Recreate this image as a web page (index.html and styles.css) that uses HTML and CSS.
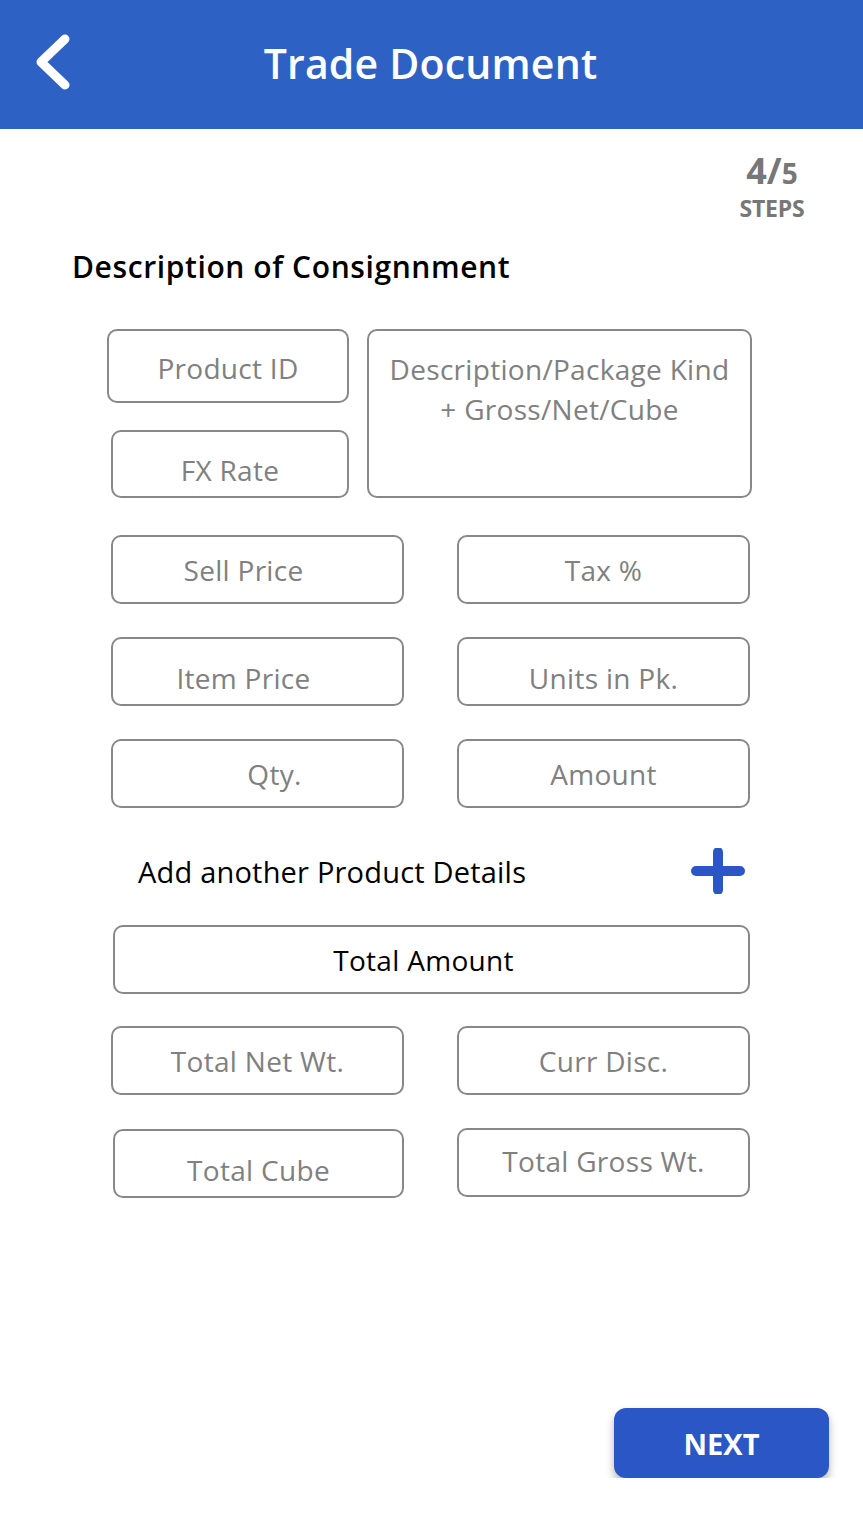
FILE: index.html
```html
<!DOCTYPE html>
<html lang="en">
<head>
    <meta charset="UTF-8">
    <meta name="viewport" content="width=device-width, initial-scale=1.0">
    <title>Trade Document</title>
    <link rel="stylesheet" href="styles.css">
</head>
<body>
    <header class="topbar">
        <a class="back" href="#">
            <svg width="40" height="56" viewBox="0 0 40 56"><path d="M33 5 L9 28 L33 51" fill="none" stroke="#fff" stroke-width="9" stroke-linecap="round" stroke-linejoin="round"/></svg>
        </a>
        <h1>Trade Document</h1>
    </header>

    <main class="page">
        <div class="steps">
            <div class="count">4/<span>5</span></div>
            <div class="label">STEPS</div>
        </div>

        <h2>Description of Consignnment</h2>

        <div class="top-grid">
            <div class="field product-id">Product ID</div>
            <div class="field desc">Description/Package Kind<br>+ Gross/Net/Cube</div>
            <div class="field fx low">FX Rate</div>
        </div>

        <div class="grid">
            <div class="field left">Sell Price</div>
            <div class="field">Tax %</div>
            <div class="field left low">Item Price</div>
            <div class="field low">Units in Pk.</div>
            <div class="field right">Qty.</div>
            <div class="field">Amount</div>
        </div>

        <div class="add-row">
            <span>Add another Product Details</span>
            <svg width="54" height="46" viewBox="0 0 54 46"><path d="M5 23 H49 M27 4 V42" stroke="#2a56c6" stroke-width="10" stroke-linecap="round"/></svg>
        </div>

        <div class="field total">Total Amount</div>

        <div class="grid">
            <div class="field">Total Net Wt.</div>
            <div class="field">Curr Disc.</div>
            <div class="field low shift">Total Cube</div>
            <div class="field up">Total Gross Wt.</div>
        </div>

        <div class="footer">
            <button type="button">NEXT</button>
        </div>
    </main>
</body>
</html>
```

FILE: styles.css
```css
body { margin: 0; font-family: "Open Sans", "Noto Sans", sans-serif; background: #fff; }
.topbar { height: 129px; background: #2e61c4; display: flex; align-items: center; position: relative; }
.back { position: absolute; left: 32px; top: 34px; }
.topbar h1 { margin: 0 auto; padding-right: 2px; padding-bottom: 4px; color: #fff; font-size: 41px; font-weight: 600; letter-spacing: 0.2px; }
.steps { display: flex; flex-direction: column; align-items: center; width: 74px; margin: 22px 54px 0 auto; color: #777; font-weight: 700; }
.steps .count { font-size: 36px; line-height: 40px; }
.steps .count span { font-size: 28px; }
.steps .label { font-size: 23px; line-height: 30px; letter-spacing: -0.2px; }
h2 { margin: 24px 0 0 72px; font-size: 30px; font-weight: 600; color: #000; letter-spacing: 0.6px; line-height: 40px; }
.field { box-sizing: border-box; border: 2.5px solid #888; border-radius: 10px; height: 69px; display: flex; align-items: center; justify-content: center; color: #808080; font-size: 28px; letter-spacing: 0.3px; }
.top-grid { display: grid; grid-template-columns: 242px 385px; grid-template-rows: 74px 68px; row-gap: 27px; column-gap: 18px; margin: 42px 0 0 107px; }
.top-grid .product-id { height: 74px; padding-top: 4px; }
.top-grid .fx { width: 238px; margin-left: 4px; height: 68px; }
.top-grid .desc { grid-row: 1 / 3; grid-column: 2; height: auto; align-items: flex-start; text-align: center; line-height: 40px; padding-top: 18px; }
.grid { display: grid; grid-template-columns: 293px 293px; column-gap: 53px; row-gap: 33px; margin: 0 0 0 111px; }
.top-grid + .grid { margin-top: 37px; }
.low { padding-top: 12px; }
.up { padding-bottom: 4px; }
.left { padding-right: 28px; }
.right { padding-left: 34px; }
.shift { margin-left: 2px; margin-top: 1px; }
.add-row { display: flex; align-items: center; justify-content: space-between; margin: 40px 118px 0 138px; font-size: 29px; color: #000; letter-spacing: 0.2px; }
.total { width: 637px; margin: 31px 0 32px 113px; color: #000; padding-right: 16px; }
.footer { display: flex; justify-content: flex-end; margin: 210px 34px 0 0; }
button { width: 215px; height: 70px; border: none; border-radius: 12px; background: #2a56c6; color: #fff; font-family: inherit; font-size: 29px; font-weight: 700; box-shadow: 0 5px 8px rgba(0, 0, 0, 0.3); cursor: pointer; }
```
